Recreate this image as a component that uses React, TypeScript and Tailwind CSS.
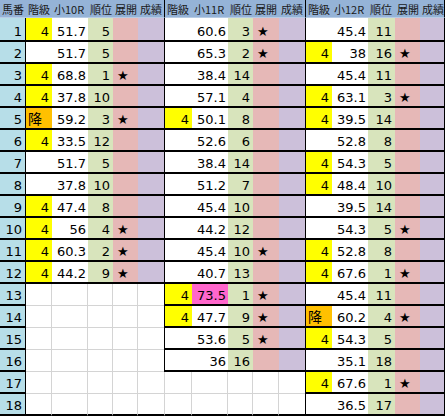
import React from 'react'

// one race block per column group: 階級, value, 順位, 展開(★), highlight
type Entry = { g: string; v: string; r: string; s?: boolean; hi?: boolean } | null

const e = (g: string, v: string, r: string, s = false, hi = false): Entry => ({ g, v, r, s, hi })

const rows: Entry[][] = [
  [e('4', '51.7', '5'), e('', '60.6', '3', true), e('', '45.4', '11')],
  [e('', '51.7', '5'), e('', '65.3', '2', true), e('4', '38', '16', true)],
  [e('4', '68.8', '1', true), e('', '38.4', '14'), e('', '45.4', '11')],
  [e('4', '37.8', '10'), e('', '57.1', '4'), e('4', '63.1', '3', true)],
  [e('降', '59.2', '3', true), e('4', '50.1', '8'), e('4', '39.5', '14')],
  [e('4', '33.5', '12'), e('', '52.6', '6'), e('', '52.8', '8')],
  [e('', '51.7', '5'), e('', '38.4', '14'), e('4', '54.3', '5')],
  [e('', '37.8', '10'), e('', '51.2', '7'), e('4', '48.4', '10')],
  [e('4', '47.4', '8'), e('', '45.4', '10'), e('', '39.5', '14')],
  [e('4', '56', '4', true), e('', '44.2', '12'), e('', '54.3', '5', true)],
  [e('4', '60.3', '2', true), e('', '45.4', '10', true), e('4', '52.8', '8')],
  [e('4', '44.2', '9', true), e('', '40.7', '13'), e('4', '67.6', '1', true)],
  [null, e('4', '73.5', '1', true, true), e('', '45.4', '11')],
  [null, e('4', '47.7', '9', true), e('降', '60.2', '4', true)],
  [null, e('', '53.6', '5', true), e('4', '54.3', '5')],
  [null, e('', '36', '16'), e('', '35.1', '18')],
  [null, null, e('4', '67.6', '1', true)],
  [null, null, e('', '36.5', '17')],
]

const headers = ['階級', '小10R', '順位', '展開', '成績', '階級', '小11R', '順位', '展開', '成績', '階級', '小12R', '順位', '展開', '成績']

const num = "font-['DejaVu_Sans',sans-serif] text-[13px] leading-[13px] text-black"
const head = "flex items-center pl-[2px] pt-[1px] bg-[#95b3d7] border-b border-b-[#b8cce4] font-['Noto_Sans_CJK_JP',sans-serif] text-[11px] leading-none text-[#1a1a1a] whitespace-nowrap overflow-hidden"

function GroupCells({ entry, prev, gi, last }: { entry: Entry; prev: Entry; gi: number; last: boolean }) {
  // group boundary line on the first cell (G2, G3)
  const lb = gi === 0 ? '' : entry || prev ? 'border-l border-l-black' : 'border-l border-l-[#d4d4d4]'
  const rb = gi === 2 ? 'border-r border-r-black' : ''

  if (!entry) {
    const bb = last ? 'border-b-2 border-b-black' : 'border-b border-b-[#d4d4d4]'
    return (
      <>
        {[0, 1, 2, 3, 4].map((i) => (
          <div
            key={i}
            className={`bg-white ${bb} ${i === 0 ? lb : ''} ${i < 4 ? 'border-r border-r-[#d4d4d4]' : ''}`}
          />
        ))}
      </>
    )
  }

  const base = 'flex items-end pb-[2px] border-b-2 border-b-black'
  const gradeBg = entry.g === '4' ? 'bg-[#ffff00]' : entry.g === '降' ? 'bg-[#ffc000]' : 'bg-white'

  return (
    <>
      {entry.g === '降' ? (
        <div className={`${base} ${lb} ${gradeBg} pl-[2px] font-['Noto_Sans_CJK_JP',sans-serif] text-[14px] leading-[16px] text-black`}>
          降
        </div>
      ) : (
        <div className={`${base} ${lb} ${gradeBg} ${num} justify-end pr-[3px]`}>{entry.g}</div>
      )}
      <div className={`${base} ${num} justify-end pr-[2px] ${entry.hi ? 'bg-[#ff66cc]' : 'bg-white'}`}>{entry.v}</div>
      <div className={`${base} ${num} justify-end pr-[3px] bg-[#d8e4bc]`}>{entry.r}</div>
      <div className={`${base} ${num} pl-[4px] bg-[#e6b8b7] text-[13px]`}>{entry.s ? '★' : ''}</div>
      <div className={`${base} ${rb} bg-[#ccc0da]`} />
    </>
  )
}

export default function App() {
  return (
    <div className="w-[446px] h-[416px] bg-white overflow-hidden">
      <div className="grid w-[445px] grid-cols-[26px_26px_36px_25px_25px_26px_28px_36px_25px_26px_26px_27px_36px_27px_25px_25px] grid-rows-[18px_24px_repeat(17,22px)]">
        {/* header row */}
        <div className={head}>馬番</div>
        {headers.map((h, i) => (
          <div
            key={i}
            className={`${head} ${i === 5 || i === 10 ? 'border-l border-l-black' : ''} ${i === 14 ? 'border-r border-r-black' : ''}`}
          >
            {h}
          </div>
        ))}

        {rows.map((row, ri) => (
          <React.Fragment key={ri}>
            <div className={`flex items-end justify-end pr-[3px] pb-[2px] bg-[#b7dee8] border-r border-r-black border-b-2 border-b-black ${num}`}>
              {ri + 1}
            </div>
            {row.map((entry, gi) => (
              <GroupCells
                key={gi}
                entry={entry}
                prev={gi > 0 ? row[gi - 1] : null}
                gi={gi}
                last={ri === rows.length - 1}
              />
            ))}
          </React.Fragment>
        ))}
      </div>
    </div>
  )
}
